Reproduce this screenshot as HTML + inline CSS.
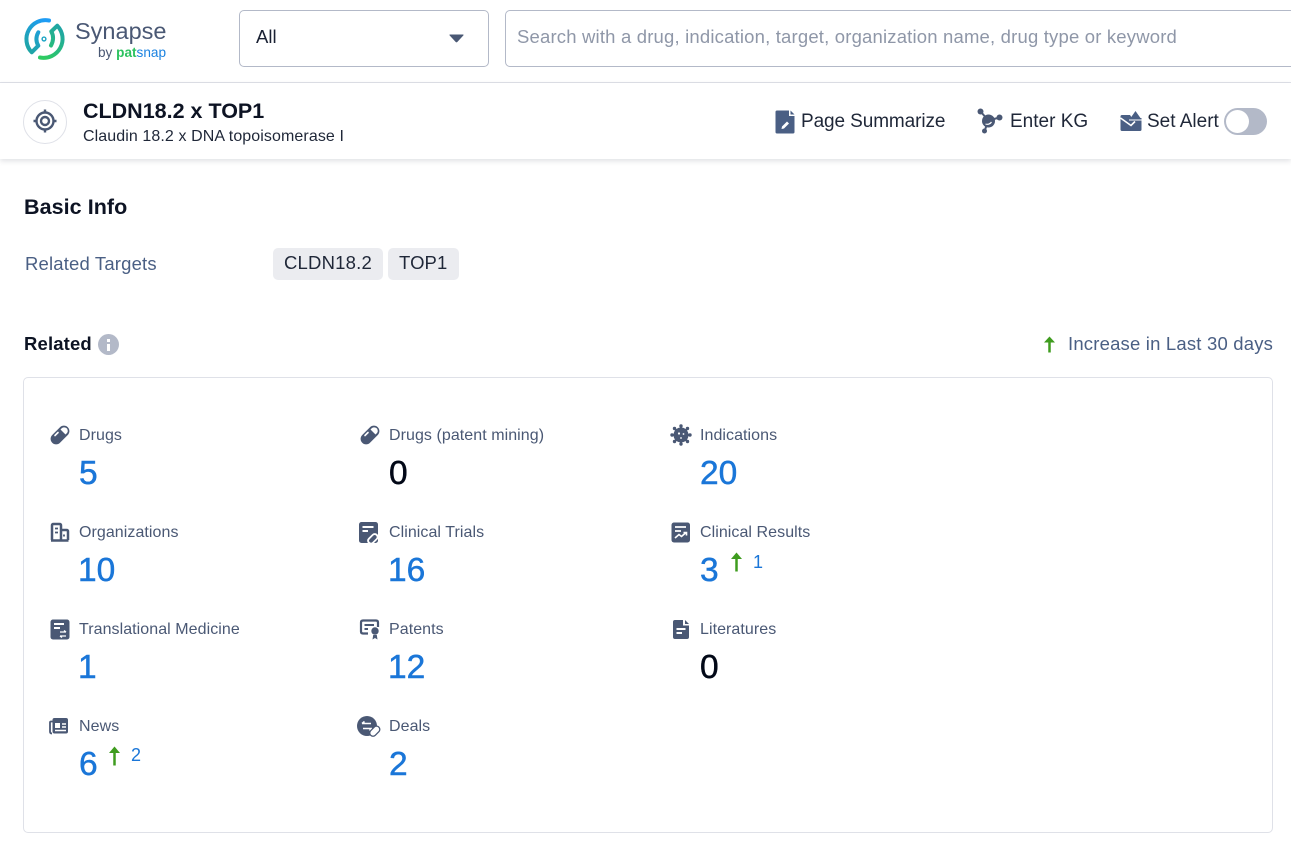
<!DOCTYPE html>
<html lang="en">
<head>
<meta charset="utf-8">
<title>CLDN18.2 x TOP1</title>
<style>
html,body{margin:0;padding:0;background:#fff;}
body{width:1291px;height:841px;overflow:hidden;position:relative;font-family:"Liberation Sans",sans-serif;color:#020817;}
.a{position:absolute;white-space:nowrap;}
.lab{position:absolute;white-space:nowrap;font-size:16px;line-height:20px;color:#4a5874;margin-top:1px;letter-spacing:.06px;}
.num{position:absolute;white-space:nowrap;font-size:33.500px;line-height:40px;color:#1a76d8;-webkit-text-stroke:.5px currentColor;margin-top:1px;}
.ic{position:absolute;width:20px;height:20px;}
svg{display:block;overflow:visible;}
</style>
</head>
<body>
<!-- Header -->
<svg class="a" style="left:23px;top:18px" width="43" height="43" viewBox="0 0 43 43">
<defs>
<linearGradient id="g1" x1="0.800" y1="0" x2="0.200" y2="1"><stop offset="0" stop-color="#1e9cf5"/><stop offset="1" stop-color="#1fa5a5"/></linearGradient>
<linearGradient id="g2" x1="0.800" y1="0" x2="0.200" y2="1"><stop offset="0" stop-color="#1fa5a5"/><stop offset="1" stop-color="#2ecb62"/></linearGradient>
</defs>
<path d="M26 2.500A19 19 0 0 0 8.700 34.300L15.300 27.700Q11.500 21 15.300 14.300" fill="none" stroke="url(#g1)" stroke-width="4" stroke-linecap="round" stroke-linejoin="round"/>
<path d="M17 39.500A19 19 0 0 0 34.300 7.700L28.300 13.500Q32 20 28 27.500" fill="none" stroke="url(#g2)" stroke-width="4" stroke-linecap="round" stroke-linejoin="round"/>
<circle cx="21" cy="21" r="1.900" fill="none" stroke="#1ea5c5" stroke-width="1.400"/>
</svg>
<div class="a" style="left:75px;top:15px;font-size:23.500px;line-height:32px;color:#4a5874;">Synapse</div>
<div class="a" style="left:98px;top:44px;font-size:13.600px;line-height:17px;color:#4a5874;">by <span style="color:#2cc25f;font-weight:bold">pat</span><span style="color:#1a82e0">snap</span></div>

<div class="a" style="left:239px;top:10px;width:248px;height:55px;border:1px solid #b3b9c8;border-radius:5px;"></div>
<div class="a" style="left:256px;top:25px;font-size:18.500px;line-height:24px;color:#1a2133;">All</div>
<svg class="a" style="left:449px;top:34px" width="15" height="9" viewBox="0 0 15 9"><path d="M1 0.500H14Q15 0.500 14.300 1.500L8.300 8Q7.500 8.800 6.700 8L0.700 1.500Q0 0.500 1 0.500Z" fill="#4a5874"/></svg>
<div class="a" style="left:505px;top:10px;width:800px;height:55px;border:1px solid #b3b9c8;border-radius:5px;"></div>
<div class="a" style="left:517px;top:25px;font-size:18.500px;line-height:24px;letter-spacing:.18px;color:#8f97a8;">Search with a drug, indication, target, organization name, drug type or keyword</div>
<div class="a" style="left:0;top:82px;width:1291px;height:1px;background:#dfe1e8;"></div>

<!-- Sub header -->
<div class="a" style="left:0;top:83px;width:1291px;height:76px;background:#fff;box-shadow:0 2px 5px rgba(60,70,90,.16);"></div>
<div class="a" style="left:23px;top:100px;width:42px;height:42px;border:1px solid #dfe1e8;border-radius:50%;"></div>
<svg class="a" style="left:33px;top:109px" width="24" height="24" viewBox="0 0 24 24" fill="none" stroke="#4a5874">
<circle cx="12" cy="12" r="8.500" stroke-width="2.400"/><circle cx="12" cy="12" r="4" stroke-width="2.400"/>
<path d="M12 0.500V4M12 20V23.500M0.500 12H4M20 12H23.500" stroke-width="2.400"/>
</svg>
<div class="a" style="left:83px;top:97px;font-size:21.500px;line-height:28px;font-weight:bold;color:#0d1323;">CLDN18.2 x TOP1</div>
<div class="a" style="left:83px;top:126px;font-size:16px;line-height:21px;letter-spacing:.09px;color:#1f2738;">Claudin 18.2 x DNA topoisomerase I</div>

<svg class="a" style="left:775px;top:110px" width="20" height="24" viewBox="0 0 20 24">
<path d="M2 0.500H14V6H19.500V22Q19.500 23.500 18 23.500H2Q0.500 23.500 0.500 22V2Q0.500 0.500 2 0.500Z" fill="#4a5f84"/><path d="M15.500 0.500L19.500 4.500H15.500Z" fill="#4a5f84"/>
<path d="M6.500 19L7 16.500L12 11.500L14 13.500L9 18.500Z" fill="#fff"/>
</svg>
<div class="a" style="left:801px;top:109px;font-size:19px;line-height:25px;letter-spacing:-.1px;color:#1f2738;">Page Summarize</div>
<svg class="a" style="left:977px;top:108px" width="26" height="26" viewBox="0 0 26 26" fill="#4a5874">
<circle cx="11.500" cy="13" r="6.500"/><circle cx="3.500" cy="3.500" r="3"/><circle cx="22.500" cy="9.500" r="3"/><circle cx="7.500" cy="23" r="2.500"/>
<path d="M3.500 3.500L11.500 12.500L22.500 9.500M11.500 12.500L7.500 23" stroke="#4a5874" stroke-width="2" fill="none"/>
<path d="M8.500 16A5 5 0 0 0 14.500 14" stroke="#fff" stroke-width="1.200" fill="none"/>
</svg>
<div class="a" style="left:1010px;top:109px;font-size:19px;line-height:25px;color:#1f2738;">Enter KG</div>
<svg class="a" style="left:1120px;top:109px" width="22" height="23" viewBox="0 0 22 23">
<path d="M2 6H10L12 9H21.500V20.500Q21.500 22 20 22H2Q0.500 22 0.500 20.500V7.500Q0.500 6 2 6Z" fill="#4a5f84"/>
<path d="M0.500 9L11 16.500L15 12.500" stroke="#fff" stroke-width="1.600" fill="none"/>
<path d="M9.500 10.500L15.500 2L21.500 10.500Z" fill="#4a5f84"/>
<path d="M9 11H21.500" stroke="#fff" stroke-width="1"/>
</svg>
<div class="a" style="left:1147px;top:109px;font-size:19px;line-height:25px;color:#1f2738;">Set Alert</div>
<div class="a" style="left:1224px;top:108px;width:43px;height:27px;background:#b3b9c8;border-radius:14px;"></div>
<div class="a" style="left:1226px;top:110px;width:23px;height:23px;background:#fff;border-radius:50%;"></div>

<!-- Basic info -->
<div class="a" style="left:24px;top:194px;font-size:21.500px;line-height:27px;font-weight:bold;letter-spacing:.06px;color:#0d1323;">Basic Info</div>
<div class="a" style="left:25px;top:252px;font-size:18.500px;line-height:24px;letter-spacing:.17px;color:#4a5f84;">Related Targets</div>
<div class="a" style="left:273px;top:248px;width:110px;height:32px;background:#ebecf0;border-radius:5px;"></div>
<div class="a" style="left:284px;top:251px;font-size:18.500px;line-height:24px;letter-spacing:.2px;color:#1f2738;">CLDN18.2</div>
<div class="a" style="left:388px;top:248px;width:71px;height:32px;background:#ebecf0;border-radius:5px;"></div>
<div class="a" style="left:399px;top:251px;font-size:18.500px;line-height:24px;letter-spacing:.1px;color:#1f2738;">TOP1</div>

<!-- Related -->
<div class="a" style="left:24px;top:332px;font-size:18.500px;line-height:24px;font-weight:bold;letter-spacing:.15px;color:#0d1323;">Related</div>
<div class="a" style="left:98px;top:334px;width:21px;height:21px;border-radius:50%;background:#b3b9c8;"></div>
<div class="a" style="left:107px;top:339px;width:3px;height:3px;background:#fff;"></div>
<div class="a" style="left:107px;top:344px;width:3px;height:7px;background:#fff;"></div>
<svg class="a" style="left:1043px;top:336px" width="13" height="17" viewBox="0 0 13 17"><path d="M6.500 16.500V3" stroke="#3f9c1f" stroke-width="2.500" fill="none"/><path d="M6.500 0.500L12 6.500H1Z" fill="#3f9c1f"/></svg>
<div class="a" style="left:1068px;top:332px;font-size:18.500px;line-height:24px;letter-spacing:.19px;color:#4a5f84;">Increase in Last 30 days</div>

<div class="a" style="left:23px;top:377px;width:1248px;height:454px;border:1px solid #dfe1e8;border-radius:5px;"></div>

<!-- Column 1 -->
<svg class="ic" style="left:50px;top:425px" viewBox="0 0 20 20" fill="none"><rect x="-1" y="4.500" width="22" height="11" rx="5.500" transform="rotate(-45 10 10)" fill="#4a5874"/><path d="M10.500 4.500L15.500 9.500L17 8Q18.500 6 17 3.500Q14.500 1.500 12 3Z" fill="#fff"/><path d="M5 10.500L8 7.500" stroke="#fff" stroke-width="1.600" stroke-linecap="round"/></svg>
<div class="lab" style="left:79px;top:425px;">Drugs</div>
<div class="num" style="left:79px;top:453px;">5</div>

<svg class="ic" style="left:50px;top:522px" viewBox="0 0 20 20" fill="none" stroke="#4a5874" stroke-width="2.500"><path d="M2 18V3.500Q2 2 3.500 2H9.500Q11 2 11 3.500V18M11 8H16.500Q18 8 18 9.500V18M1 18.500H18.500"/><path d="M5 6.500H8M5 10.500H8M14 12.500V14.500" stroke-width="1.800"/></svg>
<div class="lab" style="left:79px;top:522px;">Organizations</div>
<div class="num" style="left:78px;top:550px;">10</div>

<svg class="ic" style="left:50px;top:619px" viewBox="0 0 20 20"><rect x="0.500" y="0.500" width="19" height="20" rx="2.500" fill="#4a5874"/><path d="M4 5H14M4 9H10" stroke="#fff" stroke-width="2"/><path d="M10 13H16M16 13L14 11.500M16 17H10M10 17L12 18.500" stroke="#fff" stroke-width="1.300" fill="none"/></svg>
<div class="lab" style="left:79px;top:619px;">Translational Medicine</div>
<div class="num" style="left:78px;top:647px;">1</div>

<svg class="ic" style="left:49px;top:716px" viewBox="0 0 20 20" fill="none"><rect x="3.500" y="2" width="15.500" height="15.500" rx="2" fill="#4a5874"/><path d="M3.500 5.500H2Q1 5.500 1 6.500V15.500Q1 17.500 3 17.500" stroke="#4a5874" stroke-width="1.800"/><rect x="6" y="7" width="5" height="5" fill="#fff"/><path d="M13 8H17M13 11H17M6 14.500H17" stroke="#fff" stroke-width="1.400"/></svg>
<div class="lab" style="left:79px;top:716px;">News</div>
<div class="num" style="left:79px;top:744px;">6</div>
<svg class="a" style="left:108px;top:746px" width="13" height="20" viewBox="0 0 13 20"><path d="M6.500 19.500V3" stroke="#3f9c1f" stroke-width="2.500" fill="none"/><path d="M6.500 0.500L12 7H1Z" fill="#3f9c1f"/></svg>
<div class="a" style="left:131px;top:744px;font-size:18px;line-height:22px;color:#1a76d8;">2</div>

<!-- Column 2 -->
<svg class="ic" style="left:360px;top:425px" viewBox="0 0 20 20" fill="none"><rect x="-1" y="4.500" width="22" height="11" rx="5.500" transform="rotate(-45 10 10)" fill="#4a5874"/><path d="M10.500 4.500L15.500 9.500L17 8Q18.500 6 17 3.500Q14.500 1.500 12 3Z" fill="#fff"/><path d="M5 10.500L8 7.500" stroke="#fff" stroke-width="1.600" stroke-linecap="round"/></svg>
<div class="lab" style="left:389px;top:425px;">Drugs (patent mining)</div>
<div class="num" style="left:389px;top:453px;color:#020817;">0</div>

<svg class="ic" style="left:359px;top:522px" viewBox="0 0 20 20"><rect x="0" y="0" width="19" height="21" rx="2.500" fill="#4a5874"/><path d="M3.500 5H14.500M3.500 9H9" stroke="#fff" stroke-width="2"/><rect x="7.500" y="13" width="13" height="7.500" rx="3.700" transform="rotate(-45 14 17)" fill="#fff"/><rect x="9.500" y="14.800" width="9" height="4" rx="2" transform="rotate(-45 14 17)" fill="#4a5874"/></svg>
<div class="lab" style="left:389px;top:522px;">Clinical Trials</div>
<div class="num" style="left:388px;top:550px;">16</div>

<svg class="ic" style="left:360px;top:619px" viewBox="0 0 20 20" fill="none"><path d="M8 14.500H3Q1 14.500 1 12.500V3.500Q1 1.500 3 1.500H16Q18 1.500 18 3.500V8" stroke="#4a5874" stroke-width="2.200"/><path d="M4.500 6H14M4.500 10H8" stroke="#4a5874" stroke-width="2"/><circle cx="15" cy="12" r="3.700" fill="#4a5874"/><path d="M12.500 20.500L13.200 16H16.800L17.500 20.500L15 19Z" fill="#4a5874"/></svg>
<div class="lab" style="left:389px;top:619px;">Patents</div>
<div class="num" style="left:388px;top:647px;">12</div>

<svg class="ic" style="left:357px;top:716px;width:24px;height:21px" viewBox="0 0 24 21"><circle cx="10" cy="10" r="10" fill="#4a5874"/><path d="M5 7.500H14M5 7.500L7.500 5.500M15 12.500H6M15 12.500L12.500 14.500" stroke="#fff" stroke-width="1.600" fill="none"/><rect x="12" y="12" width="11.500" height="6.500" rx="3.200" transform="rotate(-45 17.700 15.200)" fill="#fff" stroke="#4a5874" stroke-width="1.300"/></svg>
<div class="lab" style="left:389px;top:716px;">Deals</div>
<div class="num" style="left:389px;top:744px;">2</div>

<!-- Column 3 -->
<svg class="ic" style="left:670px;top:424px;width:22px;height:22px" viewBox="0 0 22 22" fill="#4a5874"><circle cx="11" cy="11" r="7.500"/><path d="M11 1V21M1 11H21M4 4L18 18M18 4L4 18" stroke="#4a5874" stroke-width="2"/><circle cx="11" cy="2" r="1.700"/><circle cx="11" cy="20" r="1.700"/><circle cx="2" cy="11" r="1.700"/><circle cx="20" cy="11" r="1.700"/><circle cx="4.500" cy="4.500" r="1.700"/><circle cx="17.500" cy="4.500" r="1.700"/><circle cx="4.500" cy="17.500" r="1.700"/><circle cx="17.500" cy="17.500" r="1.700"/><circle cx="9" cy="9.500" r="1.100" fill="#fff"/><circle cx="13.500" cy="10" r="0.900" fill="#fff"/><circle cx="11" cy="14" r="0.900" fill="#fff"/></svg>
<div class="lab" style="left:700px;top:425px;">Indications</div>
<div class="num" style="left:700px;top:453px;">20</div>

<svg class="ic" style="left:671px;top:522px" viewBox="0 0 20 20"><rect x="0.500" y="0.500" width="18.500" height="20" rx="2.500" fill="#4a5874"/><path d="M4 5H15M4 9H10" stroke="#fff" stroke-width="1.800"/><path d="M4 16L8 12.500L10.500 14.500L15 10.500M12.500 10.500H15.500V13.500" stroke="#fff" stroke-width="1.600" fill="none"/></svg>
<div class="lab" style="left:700px;top:522px;">Clinical Results</div>
<div class="num" style="left:700px;top:550px;">3</div>
<svg class="a" style="left:730px;top:552px" width="13" height="20" viewBox="0 0 13 20"><path d="M6.500 19.500V3" stroke="#3f9c1f" stroke-width="2.500" fill="none"/><path d="M6.500 0.500L12 7H1Z" fill="#3f9c1f"/></svg>
<div class="a" style="left:753px;top:551px;font-size:18px;line-height:22px;color:#1a76d8;">1</div>

<svg class="ic" style="left:673px;top:620px;width:16px;height:19px" viewBox="0 0 16 19"><path d="M2 0H10V5.500H16V17Q16 19 14 19H2Q0 19 0 17V2Q0 0 2 0Z" fill="#4a5874"/><path d="M12 0L16 4H12Z" fill="#4a5874"/><path d="M3.500 9H12.500M3.500 13H9" stroke="#fff" stroke-width="2"/></svg>
<div class="lab" style="left:700px;top:619px;">Literatures</div>
<div class="num" style="left:700px;top:647px;color:#020817;">0</div>
</body>
</html>
